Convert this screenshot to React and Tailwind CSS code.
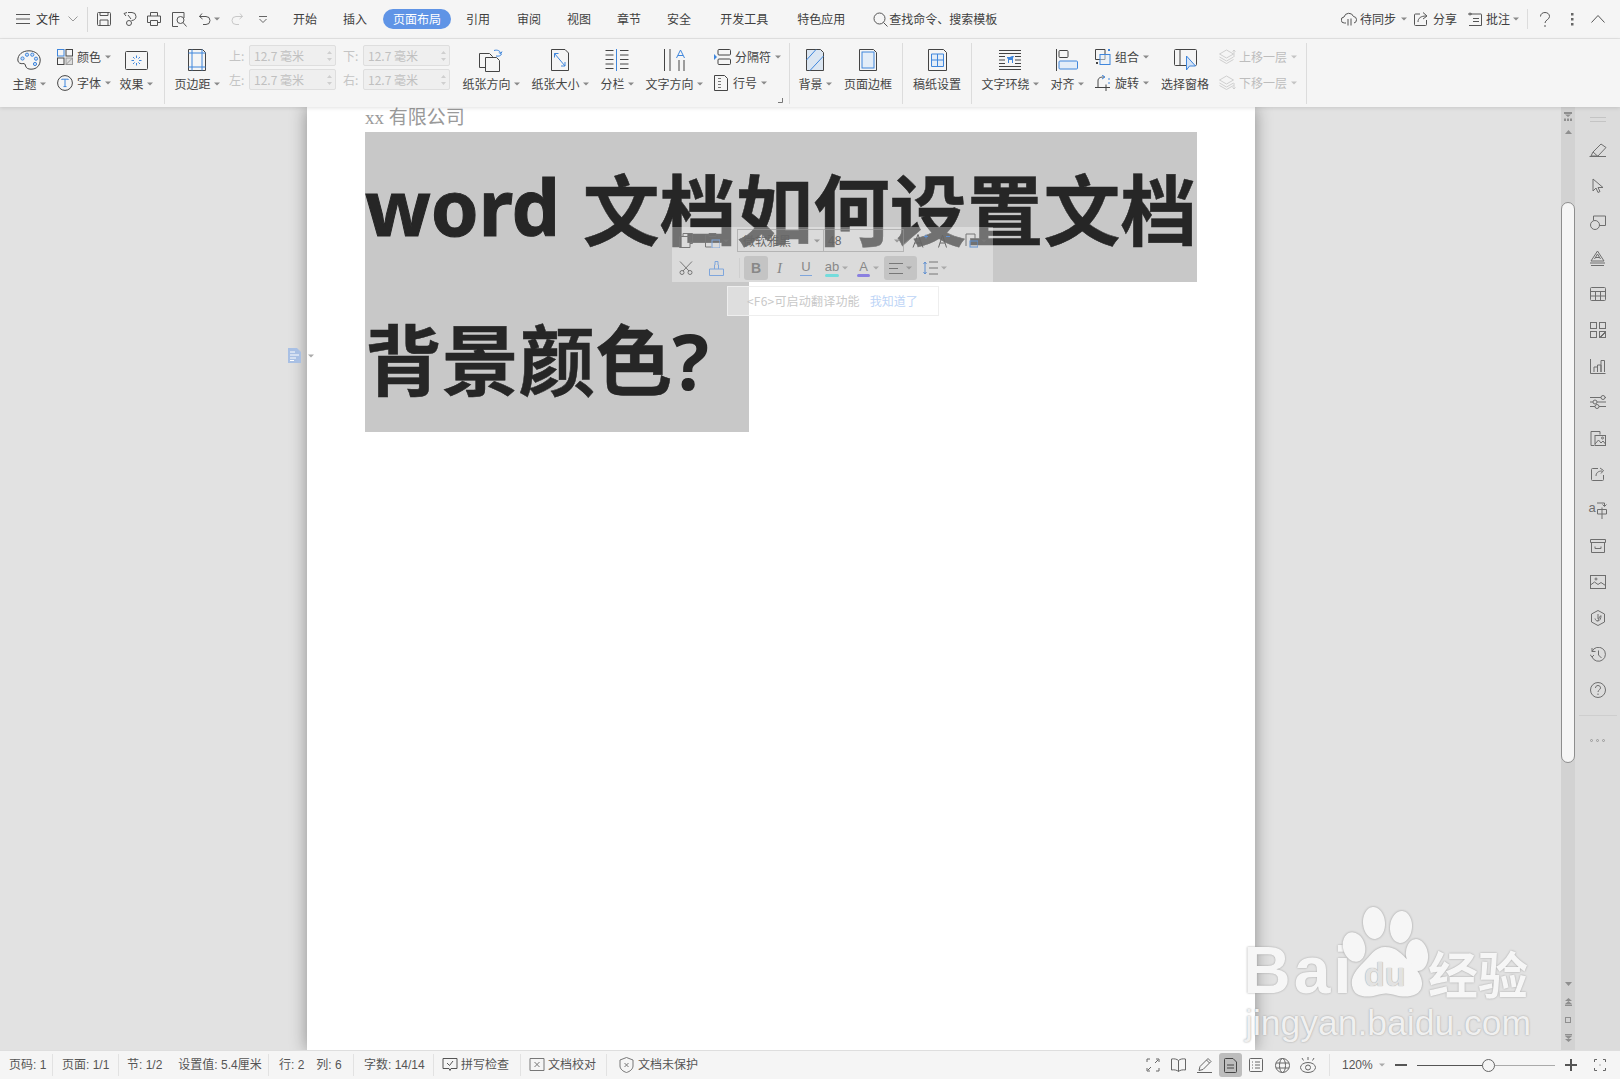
import React from "react";

const cjk = '"Noto Sans CJK SC","Noto Sans",sans-serif';

function Ic({ w = 16, h = 16, s = "#555", sw = 1, children }) {
  return (
    <svg width={w} height={h} viewBox={`0 0 ${w} ${h}`} fill="none" stroke={s} strokeWidth={sw} className="shrink-0">
      {children}
    </svg>
  );
}
const B = "#3f86dc";
const Caret = ({ c = "#8a8a8a" }) => (
  <svg width="6" height="4" viewBox="0 0 6 4" className="shrink-0 ml-[3px]"><path d="M0 .5h6L3 3.5z" fill={c} /></svg>
);

/* ribbon large column */
function Big({ w, ml, icon, label, caret }) {
  return (
    <div className="flex flex-col items-center shrink-0" style={{ width: w, marginLeft: ml }}>
      <div className="h-[22px] mt-[10px] flex items-center justify-center">{icon}</div>
      <div className="mt-[5px] h-[16px] leading-[16px] flex items-center whitespace-nowrap">
        {label}
        {caret && <Caret />}
      </div>
    </div>
  );
}
function SmallRow({ icon, label, caret, gray, gap = 4 }) {
  return (
    <div className={`h-[22px] flex items-center whitespace-nowrap ${gray ? "text-[#bdbdbd]" : ""}`}>
      {icon}
      <span style={{ marginLeft: gap }}>{label}</span>
      {caret && <span className="ml-[1px] flex"><Caret c={gray ? "#c4c4c4" : "#8a8a8a"} /></span>}
    </div>
  );
}
function SmallCol({ w, ml, children }) {
  return <div className="flex flex-col pt-[7px] gap-[4px] shrink-0" style={{ width: w, marginLeft: ml }}>{children}</div>;
}
function Field({ t }) {
  return (
    <div className="flex items-center h-[21px]">
      <span className="w-[20px] text-[#c4c4c4] shrink-0">{t}</span>
      <div className="w-[87px] h-[21px] bg-[#efefef] border border-[#dedede] rounded-[2px] flex items-center pl-[4px] pr-[2px] justify-between text-[#c0c0c0]">
        <span className="whitespace-nowrap">12.7 毫米</span>
        <svg width="7" height="14" viewBox="0 0 7 14"><path d="M1 5l2.5-3L6 5zM1 9l2.5 3L6 9z" fill="#cfcfcf" /></svg>
      </div>
    </div>
  );
}
function Group({ w, children }) {
  return (
    <div className="relative flex shrink-0 h-full" style={{ width: w }}>
      {children}
      <div className="absolute right-0 top-[4px] bottom-[3px] w-px bg-[#dcdcdc]" />
    </div>
  );
}

const Palette = (
  <Ic w={24} h={20}>
    <path d="M12 .8C5 .8.8 5 .8 10c0 3 3 4 5 3.6 2-.4 2.4.8 2.8 2.4.5 2 2.4 3.2 5.4 3.2 6 0 9.2-4 9.2-9.2S18 .8 12 .8z" stroke="#444" />
    <g stroke={B} fill="#cfe0f6"><circle cx="5.5" cy="8.5" r="1.6" /><circle cx="10" cy="4.7" r="1.6" /><circle cx="15.3" cy="4.7" r="1.6" /><circle cx="19" cy="8.7" r="1.6" /><circle cx="18" cy="14" r="1.6" /></g>
  </Ic>
);
const Colors = (
  <Ic w={16} h={16}>
    <rect x=".5" y=".5" width="6.5" height="6.5" stroke={B} /><rect x="9" y=".5" width="6.5" height="6.5" stroke="#444" /><rect x=".5" y="9" width="6.5" height="6.5" stroke="#444" /><rect x="9" y="9" width="6.5" height="6.5" stroke="#999" fill="#ddd" /><path d="M9 15.5l6.5-6.5" stroke="#999" />
  </Ic>
);
const FontI = (
  <Ic w={16} h={16}>
    <circle cx="8" cy="8" r="7.4" stroke="#444" /><path d="M4.8 5v-.8h6.4V5M8 4.2v7.4M6.5 11.6h3" stroke={B} />
  </Ic>
);
const Effect = (
  <Ic w={23} h={19}>
    <rect x=".5" y=".5" width="22" height="18" rx="1" stroke="#444" />
    <path d="M11.5 4.5v2.5M11.5 12v2.500M6.500 9.500H9M14 9.500h2.500M8 6l1.600 1.600M13.400 11.400L15 13M15 6l-1.600 1.600M9.600 11.400L8 13" stroke={B} />
  </Ic>
);
const Margin = (
  <Ic w={18} h={22}>
    <path d="M.5.5h14l3 3v18H.5z" stroke="#444" /><path d="M4 .5v21M14 .5v21M.5 4h17M.5 18h17" stroke={B} />
  </Ic>
);
const Orient = (
  <Ic w={24} h={24}>
    <path d="M.5 5.500h10l3 3v11H.5z" stroke="#444" /><path d="M6.500 9.500h11l3 3v11h-14z" fill="#f5f5f5" stroke="#444" /><path d="M15 2.500c3-1 6 0 7 3M22 5.500l1-2M22 5.500l-2.200-.8M17 8c3 .6 5-.4 5.500-2" stroke={B} />
  </Ic>
);
const PaperSize = (
  <Ic w={18} h={22}>
    <path d="M.5.5h13.500l3.500 3.500v17.500H.5z" stroke="#444" /><path d="M3.500 4.500l10.500 12.500M3.500 4.500v4M3.500 4.500h4M14 17v-4M14 17h-4" stroke={B} />
  </Ic>
);
const Columns = (
  <Ic w={24} h={22}>
    <path d="M.5 1.500h8M.5 6h8M.5 10.500h8M.5 15h8M.5 19.500h8M15 1.500h8.500M15 6h8.500M15 10.500h8.500M15 15h8.500M15 19.500h8.500" stroke="#444" /><path d="M11.500 0v22" stroke={B} />
  </Ic>
);
const TextDir = (
  <Ic w={21} h={22}>
    <path d="M.5 0v22M6 0v22M15 11v11M20 11v11" stroke="#444" /><path d="M12.500 9l4-8 4 8M14 6.500h5" stroke={B} />
  </Ic>
);
const Breaks = (
  <Ic w={17} h={16}>
    <rect x="4" y=".5" width="12.500" height="5.500" rx="1" stroke="#444" /><rect x="4" y="10" width="12.500" height="5.500" rx="1" stroke="#444" /><path d="M0 5l3 3-3 3z" fill={B} stroke="none" />
  </Ic>
);
const LineNum = (
  <Ic w={14} h={16}>
    <path d="M.5.5h10l3 3v12H.5z" stroke="#444" /><path d="M4 3.500h3M4 6.500h3M4 9.500h3M4 12.500h3" stroke="#777" />
  </Ic>
);
const Bg = (
  <Ic w={18} h={22}>
    <path d="M.5.5h14l3 3v18H.5z" stroke="#444" fill="#dbe6f2" /><path d="M.5 11L10 .5M4 21.500L17.500 7" stroke={B} />
  </Ic>
);
const PageBorder = (
  <Ic w={18} h={22}>
    <path d="M.5.5h14l3 3v18H.5z" stroke="#444" /><rect x="3" y="3" width="12" height="16" stroke={B} fill="#e3edf8" />
  </Ic>
);
const Gaozhi = (
  <Ic w={19} h={22}>
    <path d="M.5.5h15l3 3v18H.5z" stroke="#444" /><path d="M3.500 5h12v12.500h-12zM9.500 5v12.500M3.500 11h12" stroke={B} fill="#e3edf8" />
  </Ic>
);
const Wrap = (
  <Ic w={22} h={20}>
    <path d="M0 .5h22M0 3.500h22M0 6.500h6M16 6.500h6M0 10h6M16 10h6M0 13.500h6M16 13.500h6M0 16.500h22M0 19.500h22" stroke="#444" />
    <path d="M8 7h3l2-1h2l-1 2v5h-1v-3H10v3H9V9L8 8z" fill={B} stroke="none" />
  </Ic>
);
const Align = (
  <Ic w={22} h={22}>
    <path d="M.5 0v22" stroke="#444" /><rect x="3" y="1.500" width="9" height="7" rx="1" stroke="#444" /><rect x="3" y="12" width="18.500" height="8" rx="1" stroke={B} fill="#e3edf8" />
  </Ic>
);
const Grp = (
  <Ic w={16} h={16}>
    <path d="M10 10.500V.5H.5v10z" stroke="#444" /><rect x="5" y="5.500" width="10" height="10" stroke={B} fill="#e3edf8" fillOpacity=".5" /><rect x="13" y="0" width="2" height="2" fill={B} stroke="none" /><rect x="1" y="13" width="2" height="2" fill="#444" stroke="none" />
  </Ic>
);
const Rotate = (
  <Ic w={16} h={16}>
    <path d="M0 12.500h15M11 9.500v6.500M3 12V6c0-3 2-4 6-4" stroke="#444" /><path d="M7 0l3 2-3 2M14 3v2M14 7v2" stroke={B} />
  </Ic>
);
const Pane = (
  <Ic w={23} h={22}>
    <path d="M1.500.5h20a1 1 0 011 1v14a1 1 0 01-1 1H12M12 16.500H1.500a1 1 0 01-1-1v-14a1 1 0 011-1M6 .5v16" stroke="#444" />
    <path d="M12.500 7v14l3-4h6z" fill="#d5e4f7" stroke={B} />
  </Ic>
);
const Layer = ({ down }) => (
  <Ic w={17} h={16} s="#cfcfcf">
    <path d="M7 1l7 4-7 4-7-4zM0 8l7 4 7-4M0 10.500l7 4 7-4" transform="translate(.5 0)" />
    {down ? <path d="M15 8v6M13.500 12.500L15 14l1.500-1.500" /> : <path d="M15 8V1M13.500 2.500L15 1l1.500 1.500" />}
  </Ic>
);

/* right panel icons */
const G = "#6e6e6e";
const panelIcons = [
  <Ic w={18} h={14} s={G}><path d="M.5 13.500h16.500M2 13l2-4L12 1l5 3.500-8 8.500zM4 9l4.500 4" /></Ic>,
  <Ic w={12} h={16} s={G}><path d="M1 1v12l3-3 2 4.500 2-1-2-4h5z" /></Ic>,
  <Ic w={16} h={15} s={G}><circle cx="5" cy="10" r="4.500" /><path d="M3.500 5.500V1h12v9.500h-6" /></Ic>,
  <Ic w={15} h={16} s={G}><path d="M1 11L7.500 1 14 11zM4.500 9l3-5 3 5M5.500 7.500h4M0 13h15M1 15.500h13" /></Ic>,
  <Ic w={16} h={14} s={G}><rect x=".5" y=".5" width="15" height="13" rx="1" /><path d="M.5 4.500h15M.5 9h15M5.500 4.500v9M10.500 4.500v9" /></Ic>,
  <Ic w={16} h={16} s={G}><rect x=".5" y=".5" width="6" height="6" /><rect x="9.500" y=".5" width="6" height="6" /><rect x=".5" y="9.500" width="6" height="6" /><rect x="9.500" y="9.500" width="6" height="6" /><path d="M9.500 15.500l6-6M11 15l4-4" /></Ic>,
  <Ic w={16} h={15} s={G}><path d="M.5 0v14.500h15M4 13v-5h3.500v5M7.500 13V6H11v7M11 13V1.500h3.500V13" /></Ic>,
  <Ic w={16} h={14} s={G}><path d="M0 2.500h11M15 2.500h1M0 7h3M7 7h9M0 11.500h5M9 11.500h7" /><circle cx="13" cy="2.500" r="2" /><circle cx="5" cy="7" r="2" /><circle cx="7" cy="11.500" r="2" /></Ic>,
  <Ic w={16} h={16} s={G}><path d="M1 15.500V1.500h9v3M1 15.500h3" /><rect x="5" y="5.500" width="10.500" height="10" /><path d="M5 14l3.500-4 2.500 3 2-2 2.500 3" /><circle cx="12.500" cy="8" r="1" /></Ic>,
  <Ic w={14} h={14} s={G}><path d="M7 1.500H1.500a1 1 0 00-1 1v10a1 1 0 001 1h10a1 1 0 001-1V8M5 9c0-3 2-5 6-5M9 1l3.500 2.500L10 6.500" /></Ic>,
  <span className="flex items-start w-[18px] h-[18px] text-[13px] leading-[13px] text-[#6e6e6e]" style={{ fontFamily: "Liberation Sans" }}>
    a
    <span className="ml-[1px]">
      <Ic w={10} h={18} s={G}><path d="M0 2h7.500v3M5.500 3.500l2 2 2-2M.5 8.500h9v4.500h-9zM5 6.500V18" /></Ic>
    </span>
  </span>,
  <Ic w={16} h={14} s={G}><path d="M.5.5h15v3H.5zM1.500 3.500v10h13v-10M5 7.500v2h6v-2" /></Ic>,
  <Ic w={16} h={14} s={G}><rect x=".5" y=".5" width="15" height="13" /><circle cx="6" cy="4" r="1" /><path d="M.5 10l4-3 3.500 2.500 3-2 4.500 3" /></Ic>,
  <Ic w={14} h={16} s={G}><path d="M7 .5l6.500 3.500v8L7 15.500.5 12V4z" /><path d="M4 8.500c1 3 3 3 3.500 1C8 7 9.500 6 10 5.500 10 8.500 9 11 6.500 11M7 4v5" /></Ic>,
  <Ic w={16} h={15} s={G}><path d="M2 4.500A7 7 0 112 10M2 1v3.500h3.500M0 7.500L2 10l2-2M8.500 3.500V8l3 3" /></Ic>,
  <Ic w={16} h={16} s={G}><circle cx="8" cy="8" r="7.500" /><path d="M5.500 6c0-1.500 1-2.500 2.500-2.500s2.500 1 2.500 2.400c0 2-2.500 2-2.500 4.100M8 11.500v1.500" /></Ic>,
];

function PanelSlot({ children }) {
  return <div className="h-[36px] flex items-center justify-center">{children}</div>;
}

function Seg({ w, pl, children, noBorder }) {
  return (
    <div className={`flex items-center h-[22px] shrink-0 whitespace-nowrap ${noBorder ? "" : "border-r border-[#e2e2e2]"}`} style={{ width: w, paddingLeft: pl }}>
      {children}
    </div>
  );
}

export default function App() {
  return (
    <div className="relative w-[1620px] h-[1079px] overflow-hidden flex flex-col bg-[#e2e2e2] text-[12px] text-[#444]" style={{ fontFamily: cjk }}>
      {/* title row */}
      <div className="h-[39px] shrink-0 flex items-center bg-[#f5f5f5] border-b border-[#e4e4e4] text-[#3f3f3f]">
        <div className="ml-[16px] shrink-0"><Ic w={14} h={12} s="#555"><path d="M0 1.500h14M0 6h14M0 10.500h14" /></Ic></div>
        <span className="ml-[6px] text-[#333]">文件</span>
        <div className="ml-[8px]"><Ic w={10} h={6} s="#999"><path d="M.5.5L5 5 9.500.5" /></Ic></div>
        <div className="ml-[9px] w-px h-[25px] bg-[#d8d8d8]" />
        <div className="ml-[9px]"><Ic w={14} h={14}><path d="M.5 1.500a1 1 0 011-1h11a1 1 0 011 1v11a1 1 0 01-1 1h-11a1 1 0 01-1-1zM3 .5v3h8v-3M3 13.500V8h8v5.500" /></Ic></div>
        <div className="ml-[12px]"><Ic w={14} h={14}><path d="M5 .5h4a4 4 0 014 4c0 2.500-2 4-4.500 4M4 .5L1 1.500l2 2.500M6 8.500a2.500 2.500 0 100 5 2.500 2.500 0 000-5zM5 3l3 4" /></Ic></div>
        <div className="ml-[10px]"><Ic w={14} h={14}><path d="M3.500 4V.5h7V4M3.500 10.500H.5V4h13v6.500h-3M3.500 8.500h7v5h-7z" /></Ic></div>
        <div className="ml-[11px]"><Ic w={15} h={15}><path d="M12 6V.5H.5v14H6" /><circle cx="8.500" cy="8" r="3.500" /><path d="M11 10.500l3.500 4" /></Ic></div>
        <div className="ml-[12px]"><Ic w={12} h={12}><path d="M3 .5L.5 3.500 3.500 6M.5 3.500H7a4 4 0 010 8H4" /></Ic></div>
        <Caret />
        <div className="ml-[11px]"><Ic w={12} h={12} s="#c8c8c8"><path d="M9 .5l2.500 3L8.500 6M11.500 3.500H5a4 4 0 000 8h3" /></Ic></div>
        <div className="ml-[16px]"><Ic w={8} h={7} s="#666"><path d="M0 .5h8M.5 3L4 6.500 7.500 3" /></Ic></div>
        <span className="ml-[26px]">开始</span>
        <span className="ml-[26px]">插入</span>
        <span className="ml-[16px] w-[68px] h-[20px] rounded-[10px] bg-[#5f94e6] text-white flex items-center justify-center">页面布局</span>
        <span className="ml-[15px]">引用</span>
        <span className="ml-[27px]">审阅</span>
        <span className="ml-[26px]">视图</span>
        <span className="ml-[26px]">章节</span>
        <span className="ml-[26px]">安全</span>
        <span className="ml-[29px]">开发工具</span>
        <span className="ml-[29px]">特色应用</span>
        <div className="ml-[28px] mr-[1px]"><Ic w={15} h={15} s="#555"><circle cx="6.500" cy="6.500" r="5.500" /><path d="M10.500 10.500l4 4" /></Ic></div>
        <span>查找命令、搜索模板</span>
        <div className="ml-auto flex items-center">
          <Ic w={16} h={14}><path d="M5 11H3.500a3 3 0 01-.5-6 5 5 0 019.500-.5A3.300 3.300 0 0113 11M7 7v6.500M10 6.500v7" /></Ic>
          <span className="ml-[3px]">待同步</span><span className="ml-[2px]"><Caret /></span>
          <span className="ml-[7px]"><Ic w={14} h={14}><path d="M6 2H1.500a1 1 0 00-1 1v9.500a1 1 0 001 1h10a1 1 0 001-1V8M4 10c0-4 3-6 8-6M9 .5L13 4l-4 3" /></Ic></span>
          <span className="ml-[5px]">分享</span>
          <span className="ml-[10px]"><Ic w={15} h={14}><path d="M3.500 2h10.500a.5.5 0 01.5.5v11H2M3 .5v3M1 2h4M6 6.500h6M6 9.500h6" /></Ic></span>
          <span className="ml-[4px]">批注</span><Caret />
          <div className="ml-[8px] w-px h-[20px] bg-[#dcdcdc]" />
          <span className="ml-[12px]"><Ic w={10} h={15}><path d="M.5 4.500C.5 2 2.500.5 5 .5s4.500 1.500 4.500 4C9.500 7.500 5 8 5 11M5 13v2" /></Ic></span>
          <span className="ml-[21px]"><svg width="3" height="13" viewBox="0 0 3 13"><path d="M0 0h2.500v2.500H0zM0 5h2.500v2.500H0zM0 10h2.500v2.500H0z" fill="#666" /></svg></span>
          <span className="ml-[17px] mr-[15px]"><Ic w={14} h={8}><path d="M.5 7.500L7 .5l6.500 7" /></Ic></span>
        </div>
      </div>

      {/* ribbon */}
      <div className="relative z-20 h-[68px] shrink-0 flex bg-[#f5f5f5] shadow-[0_1px_4px_rgba(0,0,0,0.12)]">
        <Group w={165}>
          <Big w={42} ml={8} icon={Palette} label="主题" caret />
          <SmallCol w={55} ml={7}>
            <SmallRow icon={Colors} label="颜色" caret />
            <SmallRow icon={FontI} label="字体" caret />
          </SmallCol>
          <Big w={44} ml={2} icon={Effect} label="效果" caret />
        </Group>
        <Group w={625}>
          <Big w={54} ml={5} icon={Margin} label="页边距" caret />
          <div className="ml-[5px] pt-[6px] flex flex-col gap-[3px] shrink-0 w-[107px]"><Field t="上:" /><Field t="左:" /></div>
          <div className="ml-[7px] pt-[6px] flex flex-col gap-[3px] shrink-0 w-[107px]"><Field t="下:" /><Field t="右:" /></div>
          <Big w={62} ml={10} icon={Orient} label="纸张方向" caret />
          <Big w={60} ml={8} icon={PaperSize} label="纸张大小" caret />
          <Big w={38} ml={8} icon={Columns} label="分栏" caret />
          <Big w={62} ml={7} icon={TextDir} label="文字方向" caret />
          <SmallCol w={70} ml={9}>
            <SmallRow icon={Breaks} label="分隔符" caret />
            <SmallRow icon={LineNum} label="行号" caret gap={5} />
          </SmallCol>
          <svg width="5" height="5" viewBox="0 0 5 5" className="absolute right-[7px] bottom-[4px]"><path d="M4.500 0v4.500H0" stroke="#777" fill="none" /></svg>
        </Group>
        <Group w={113}>
          <Big w={38} ml={6} icon={Bg} label="背景" caret />
          <Big w={52} ml={8} icon={PageBorder} label="页面边框" />
        </Group>
        <Group w={69}>
          <Big w={56} ml={6} icon={Gaozhi} label="稿纸设置" />
        </Group>
        <Group w={335}>
          <Big w={62} ml={7} icon={Wrap} label="文字环绕" caret />
          <Big w={40} ml={6} icon={Align} label="对齐" caret />
          <SmallCol w={58} ml={8}>
            <SmallRow icon={Grp} label="组合" caret />
            <SmallRow icon={Rotate} label="旋转" caret />
          </SmallCol>
          <Big w={56} ml={4} icon={Pane} label="选择窗格" />
          <SmallCol w={80} ml={6}>
            <SmallRow icon={<Layer />} label="上移一层" caret gray gap={3} />
            <SmallRow icon={<Layer down />} label="下移一层" caret gray gap={3} />
          </SmallCol>
        </Group>
      </div>

      {/* body */}
      <div className="relative flex-1 min-h-0 flex overflow-hidden">
        <div className="relative flex-1 min-w-0 overflow-hidden bg-[#e2e2e2]">
          <div className="relative ml-[307px] w-[948px] h-full bg-white shadow-[0_0_16px_rgba(0,0,0,0.38)] pl-[58px]">
            <div className="h-[25px] leading-[22px] text-[19px] text-[#9a9a9a] whitespace-nowrap" style={{ fontFamily: '"Liberation Serif","Noto Sans CJK SC",serif' }}>
              xx 有限公司
            </div>
            <div className="text-[76.8px] leading-[150px] font-bold text-[#262626] whitespace-nowrap" style={{ fontFamily: '"Noto Sans","Noto Sans CJK SC",sans-serif' }}>
              <div className="w-[832px] h-[150px] bg-[#c8c8c8] flex justify-between">
                <span className="[-webkit-text-stroke:1px_#262626]">word</span>
                <span className="[-webkit-text-stroke:0.5px_#262626]" style={{ fontFamily: '"Noto Sans CJK SC",sans-serif' }}>文档如何设置文档</span>
              </div>
              <div className="w-[384px] h-[150px] bg-[#c8c8c8]">
                <span className="[-webkit-text-stroke:0.5px_#262626]" style={{ fontFamily: '"Noto Sans CJK SC",sans-serif' }}>背景颜色</span>?
              </div>
            </div>
          </div>

          {/* margin marker */}
          <div className="absolute left-[288px] top-[241px] flex items-center">
            <Ic w={13} h={15} s="#ffffff"><path d="M0 0h9l4 4v11H0z" fill="#a9c0e4" stroke="none" /><path d="M2 4h5M2 7h9M2 10h6M2 12.500h4" /></Ic>
            <span className="ml-[4px]"><Caret c="#aaaaaa" /></span>
          </div>

          {/* floating toolbar */}
          <div className="absolute left-[672px] top-[120px] w-[321px] h-[55px] bg-white/35 text-[#666]">
            <div className="h-[27px] flex items-center">
              <span className="ml-[7px]"><Ic w={14} h={15} s="#777"><path d="M4 3V.5h9.500v10H11M.5 3.500H11v11H.5z" /></Ic></span>
              <span className="ml-[12px]"><Ic w={15} h={15} s="#777"><path d="M4 2H.5v12h6M11 2h3v3M4 .5h7v3H4z" /><rect x="7" y="7" width="8" height="8" stroke="#7fa6dc" /></Ic></span>
              <Caret c="#777" />
              <div className="ml-[8px] w-[87px] h-[23px] border border-[#9a9a9a]/60 flex items-center pl-[5px] pr-[3px] justify-between text-[#666]">
                <span>微软雅黑</span><Caret c="#999" />
              </div>
              <div className="w-[80px] h-[23px] border border-l-0 border-[#9a9a9a]/60 flex items-center pl-[4px] pr-[3px] justify-between">
                <span style={{ fontFamily: "Liberation Sans" }}>48</span><Caret c="#999" />
              </div>
              <span className="ml-[8px]"><Ic w={16} h={14} s="#666"><path d="M1 13.500L6 .5l5 13M3 9h6" /><path d="M12 2.500h4M14 .5v4" stroke="#5f8fd0" /></Ic></span>
              <span className="ml-[10px]"><Ic w={12} h={14} s="#666"><path d="M.5 13.500L4.500 1l4 12.500M2 9h5" /><path d="M8 2.500h4" stroke="#5f8fd0" /></Ic></span>
              <span className="ml-[13px]"><Ic w={15} h={15} s="#777"><path d="M3 13V1h9v5" /><rect x="7" y="8" width="8" height="6" stroke="#5f8fd0" /></Ic></span>
              <Caret c="#777" />
            </div>
            <div className="h-[28px] flex items-center">
              <span className="ml-[7px]"><Ic w={14} h={14} s="#777"><path d="M1 .5L10 10M13 .5L4 10" /><circle cx="3" cy="11.500" r="2" /><circle cx="11" cy="11.500" r="2" /></Ic></span>
              <span className="ml-[16px]"><Ic w={15} h={15} s="#7fa6dc"><path d="M.5 8h14v6.500H.5zM5.500 8V4H6V.5h3V4h.5v4" /></Ic></span>
              <div className="ml-[15px] w-px h-[20px] bg-[#cfcfcf]" />
              <div className="ml-[4px] w-[24px] h-[24px] rounded-[3px] bg-[#c4c4c4] flex items-center justify-center font-bold text-[14px] text-[#888]" style={{ fontFamily: "Liberation Sans" }}>B</div>
              <span className="ml-[9px] w-[10px] italic text-[15px] leading-none text-[#888]" style={{ fontFamily: "Liberation Serif" }}>I</span>
              <div className="ml-[13px] flex flex-col items-center w-[12px]">
                <span className="text-[13px] leading-[13px] text-[#888]" style={{ fontFamily: "Liberation Sans" }}>U</span>
                <div className="w-[12px] h-[1px] mt-[2px] bg-[#7fa6dc]" />
              </div>
              <div className="ml-[13px] flex flex-col items-center w-[14px]">
                <span className="text-[13px] leading-[13px] text-[#888]" style={{ fontFamily: "Liberation Sans" }}>ab</span>
                <div className="w-[14px] h-[3px] mt-[1px] rounded-sm bg-[#74dcdc]" />
              </div>
              <Caret c="#aaa" />
              <div className="ml-[9px] flex flex-col items-center w-[13px]">
                <span className="text-[13px] leading-[13px] text-[#888]" style={{ fontFamily: "Liberation Sans" }}>A</span>
                <div className="w-[13px] h-[3px] mt-[1px] rounded-sm bg-[#8a80e0]" />
              </div>
              <Caret c="#aaa" />
              <div className="ml-[5px] w-[33px] h-[24px] rounded-[3px] bg-[#c4c4c4] flex items-center pl-[5px]">
                <Ic w={14} h={11} s="#777"><path d="M0 .5h14M0 5.500h9M0 10.500h14" /></Ic>
                <Caret c="#999" />
              </div>
              <span className="ml-[6px]"><Ic w={15} h={14} s="#777"><path d="M6 1h9M6 7h9M6 13h9" /><path d="M2 1v12M.5 3L2 1l1.500 2M.5 11L2 13l1.500-2" stroke="#5f8fd0" /></Ic></span>
              <Caret c="#aaa" />
            </div>
          </div>

          {/* hint */}
          <div className="absolute left-[727px] top-[179px] w-[212px] h-[30px] border border-[#eeeeee] bg-white/40 flex items-center pl-[19px] text-[#c8c8c8] whitespace-nowrap">
            <span className="tracking-[0.2px]">&lt;F6&gt;可启动翻译功能</span>
            <span className="ml-[10px] text-[#bcd4f6]">我知道了</span>
          </div>
        </div>

        {/* scrollbar */}
        <div className="relative w-[14px] shrink-0 bg-[#d2d2d2] flex flex-col items-center">
          <div className="h-[18px] flex items-center"><svg width="8" height="9" viewBox="0 0 8 9"><path d="M0 0h8v2H0zM1 2.500h6L4 5zM0 6.500h2V9H0zM3 6.500h2V9H3zM6 6.500h2V9H6z" fill="#8f8f8f" /></svg></div>
          <div className="h-[14px] flex items-center"><svg width="7" height="4" viewBox="0 0 7 4"><path d="M3.500 0L7 4H0z" fill="#8f8f8f" /></svg></div>
          <div className="mt-[63px] w-[14px] h-[561px] bg-[#f6f6f6] border border-[#8e8e8e] rounded-[8px] shrink-0" />
          <div className="mt-auto mb-[8px] flex flex-col items-center">
            <svg width="7" height="4" viewBox="0 0 7 4"><path d="M0 0h7L3.500 4z" fill="#8f8f8f" /></svg>
            <svg width="7" height="8" viewBox="0 0 7 8" className="mt-[12px]"><path d="M3.500 0L7 3H0zM3.500 3L7 6H0zM0 6.500h7V8H0z" fill="#8f8f8f" /></svg>
            <div className="mt-[11px] w-[6px] h-[6px] border border-[#8f8f8f]" />
            <svg width="7" height="8" viewBox="0 0 7 8" className="mt-[11px]"><path d="M0 0h7v1.500H0zM0 2h7L3.500 5zM0 5h7L3.500 8z" fill="#8f8f8f" /></svg>
          </div>
        </div>

        {/* right panel */}
        <div className="w-[45px] shrink-0 bg-[#dcdcdc] flex flex-col items-center">
          <div className="h-[26px] flex items-center -mt-[1px]"><Ic w={16} h={5} s="#c4c4c4"><path d="M0 .5h16M0 4.500h16" /></Ic></div>
          {panelIcons.map((ic, i) => <PanelSlot key={i}>{ic}</PanelSlot>)}
          <div className="mt-[7px] w-[38px] h-px bg-[#cecece]" />
          <div className="mt-[23px] flex gap-[3px]">
            <span className="w-[3px] h-[3px] rounded-full border border-[#9a9a9a]" />
            <span className="w-[3px] h-[3px] rounded-full border border-[#9a9a9a]" />
            <span className="w-[3px] h-[3px] rounded-full border border-[#9a9a9a]" />
          </div>
        </div>
      </div>

      {/* status bar */}
      <div className="relative z-20 h-[29px] shrink-0 flex items-center bg-[#f5f5f5] border-t border-[#dedede] text-[#555]" style={{ fontFamily: '"Liberation Sans","Noto Sans CJK SC",sans-serif' }}>
        <Seg w={53} pl={9}>页码: 1</Seg>
        <Seg w={66} pl={9}>页面: 1/1</Seg>
        <Seg w={150} pl={8}><span>节: 1/2</span><span className="ml-[16px]">设置值: 5.4厘米</span></Seg>
        <Seg w={85} pl={10}><span>行: 2</span><span className="ml-[12px]">列: 6</span></Seg>
        <Seg w={80} pl={10}>字数: 14/14</Seg>
        <Seg w={87} pl={8}>
          <Ic w={16} h={14}><path d="M1 .5h14v10H9l-1 2-1-2H1z" /><path d="M5 5l2.500 2.500L11 3" /></Ic>
          <span className="ml-[3px]">拼写检查</span>
        </Seg>
        <Seg w={86} pl={8}>
          <Ic w={16} h={14} s="#777"><path d="M1 .5h14v12H1z" /><path d="M5.500 4l5 5M10.500 4l-5 5" /></Ic>
          <span className="ml-[3px]">文档校对</span>
        </Seg>
        <Seg w={100} pl={12} noBorder>
          <Ic w={15} h={16} s="#777"><path d="M7.500.5l6.500 2.500v6c0 3-3 5.500-6.500 6.500C4 14.500 1 12 1 9V3z" /><path d="M5.500 6l4 4M9.500 6l-4 4" /></Ic>
          <span className="ml-[4px]">文档未保护</span>
        </Seg>
        <div className="ml-auto w-[474px] flex items-center h-full">
          <Ic w={14} h={14} s="#666"><path d="M1 4V1h3M10 1h3v3M1 10v3h3M13 10v3h-3M9 5l3-3M5 9l-3 3" /></Ic>
          <span className="ml-[11px]"><Ic w={15} h={14} s="#666"><path d="M7.500 2.500C6 1 3 .5.500 1v11c2.500-.5 5.500 0 7 1.500 1.500-1.500 4.500-2 7-1.500V1c-2.500-.5-5.500 0-7 1.500zM7.500 2.500v11" /></Ic></span>
          <span className="ml-[11px]"><Ic w={15} h={15} s="#666"><path d="M0 14.500h15M2 12.500l1-4L11 .5l3 3L6 11.500zM9.500 2l3 3" /></Ic></span>
          <div className="ml-[7px] w-[23px] h-[24px] rounded-[3px] bg-[#bdbdbd] flex items-center justify-center">
            <Ic w={13} h={15} s="#444"><path d="M.5 1.500a1 1 0 011-1H9l3.500 3.500v9.500a1 1 0 01-1 1h-10a1 1 0 01-1-1zM3 7h7M3 10h7" /></Ic>
          </div>
          <span className="ml-[7px]"><Ic w={14} h={14} s="#666"><rect x=".5" y=".5" width="13" height="13" rx="1" /><path d="M3 4h1M6 4h5M3 7h1M6 7h5M3 10h1M6 10h5" /></Ic></span>
          <span className="ml-[12px]"><Ic w={15} h={15} s="#666"><circle cx="7.500" cy="7.500" r="7" /><ellipse cx="7.500" cy="7.500" rx="3" ry="7" /><path d="M1 5h13M1 10h13" /></Ic></span>
          <span className="ml-[10px]"><Ic w={16} h={16} s="#666"><ellipse cx="8" cy="10.500" rx="7.500" ry="5" /><circle cx="8" cy="10.500" r="2.500" /><path d="M8 0v3M2 1l1.500 2.500M14 1l-1.500 2.500" /></Ic></span>
          <div className="ml-[13px] w-px h-[22px] bg-[#e2e2e2]" />
          <span className="ml-[12px]">120%</span>
          <span className="ml-[3px]"><Caret c="#aaa" /></span>
          <div className="ml-[10px] w-[12px] h-[2px] bg-[#555]" />
          <div className="relative ml-[10px] w-[138px] h-[1px] bg-[#aaaaaa]">
            <div className="w-[71px] h-[1px] bg-[#555]" />
            <div className="absolute left-[65px] top-[-6px] w-[13px] h-[13px] rounded-full border border-[#666] bg-[#f5f5f5]" />
          </div>
          <span className="ml-[10px]"><Ic w={12} h={12} s="#555" sw={2}><path d="M0 6h12M6 0v12" /></Ic></span>
          <span className="ml-[17px]"><Ic w={12} h={12} s="#666"><path d="M.5 3V.5H3M9 .5h2.500V3M.5 9v2.500H3M11.500 9v2.500H9M5.500 6h1" /></Ic></span>
        </div>
      </div>

      {/* watermark */}
      <div className="absolute left-[1245px] top-[905px] w-[290px] h-[140px] z-10 text-[#f6f6f6] whitespace-nowrap" style={{ fontFamily: '"Liberation Sans",sans-serif' }}>
        <span className="absolute left-[-2px] top-[30px] text-[66px] leading-[70px] font-bold tracking-[3px] [text-shadow:0_0_2px_#9a9a9a]">Bai</span>
        <svg width="88" height="94" viewBox="0 0 88 94" className="absolute left-[96px] top-[0px] drop-shadow-[0_0_1px_#999]">
          <g fill="#f6f6f6">
            <ellipse cx="33" cy="18" rx="11" ry="16" transform="rotate(-5 33 18)" />
            <ellipse cx="60" cy="22" rx="11" ry="16" transform="rotate(5 60 22)" />
            <ellipse cx="13" cy="42" rx="11" ry="15" transform="rotate(-15 13 42)" />
            <ellipse cx="76" cy="50" rx="11" ry="16" transform="rotate(-8 76 50)" />
            <path d="M44 42C34 42 30 50 22 58 14 66 8 74 12 84c3 8 14 9 24 6 6-2 12-2 18 0 10 3 22 2 26-6 4-10-4-20-12-28-8-7-12-14-24-14z" />
          </g>
        </svg>
        <span className="absolute left-[119px] top-[51px] text-[34px] leading-[36px] font-bold text-[#e2e2e2] [text-shadow:0_0_1px_#8a8a8a]">du</span>
        <span className="absolute left-[183px] top-[38px] text-[50px] leading-[58px] font-bold [text-shadow:0_0_2px_#9a9a9a]" style={{ fontFamily: cjk }}>经验</span>
        <span className="absolute left-0 top-[95px] text-[35.500px] leading-[46px] text-[#f0f0f0] [text-shadow:0_0_2px_#9a9a9a]">jingyan.baidu.com</span>
      </div>
    </div>
  );
}
